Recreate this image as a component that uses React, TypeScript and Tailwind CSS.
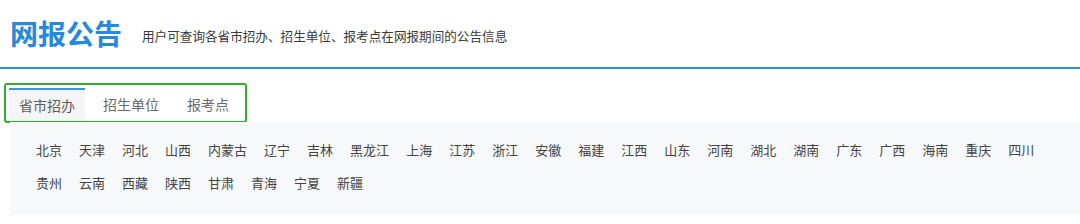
import React from "react";

const row = [
  "北京","天津","河北","山西","内蒙古","辽宁","吉林","黑龙江","上海","江苏","浙江","安徽",
  "福建","江西","山东","河南","湖北","湖南","广东","广西","海南","重庆","四川",
  "贵州","云南","西藏","陕西","甘肃","青海","宁夏","新疆",
];

export default function App() {
  return (
    <div className="w-[1080px] h-[224px] bg-white overflow-hidden font-['Microsoft_YaHei','Noto_Sans_CJK_SC',sans-serif]">
      <div className="h-[67px] flex items-end pl-[10px] pb-[19px]">
        <div className="text-[28px] leading-[30px] font-bold text-[#2589dc]">网报公告</div>
        <div className="ml-[20px] mb-[4px] text-[12.6px] leading-[16px] text-[#3a3a3a]">
          用户可查询各省市招办、招生单位、报考点在网报期间的公告信息
        </div>
      </div>
      <div className="h-[2px] bg-[#2e8fdc]" />
      <div className="mt-[14px] ml-[4px] w-[243px] h-[40px] border-2 border-[#2fb02f] rounded-[3px] pt-[1px] pl-[3px] flex">
        <div className="h-[33px] mt-[2px] px-[10px] bg-[#f4f5f7] border-t-2 border-[#3a95dd] text-[14px] leading-[31px] text-[#5c5c5c]">
          省市招办
        </div>
        <div className="h-[33px] mt-[2px] ml-[8px] px-[10px] text-[14px] leading-[33px] text-[#6a6a6a]">招生单位</div>
        <div className="h-[33px] mt-[2px] ml-[8px] px-[10px] text-[14px] leading-[33px] text-[#6a6a6a]">报考点</div>
      </div>
      <div className="ml-[10px] -mt-[1px] h-[93px] bg-[#f7f8fa] pl-[26px] pr-[20px] pt-[11px]">
        <div className="flex flex-wrap">
          {row.map((p) => (
            <span key={p} className="mr-[17px] text-[13px] leading-[33px] text-[#444]">{p}</span>
          ))}
        </div>
      </div>
    </div>
  );
}
